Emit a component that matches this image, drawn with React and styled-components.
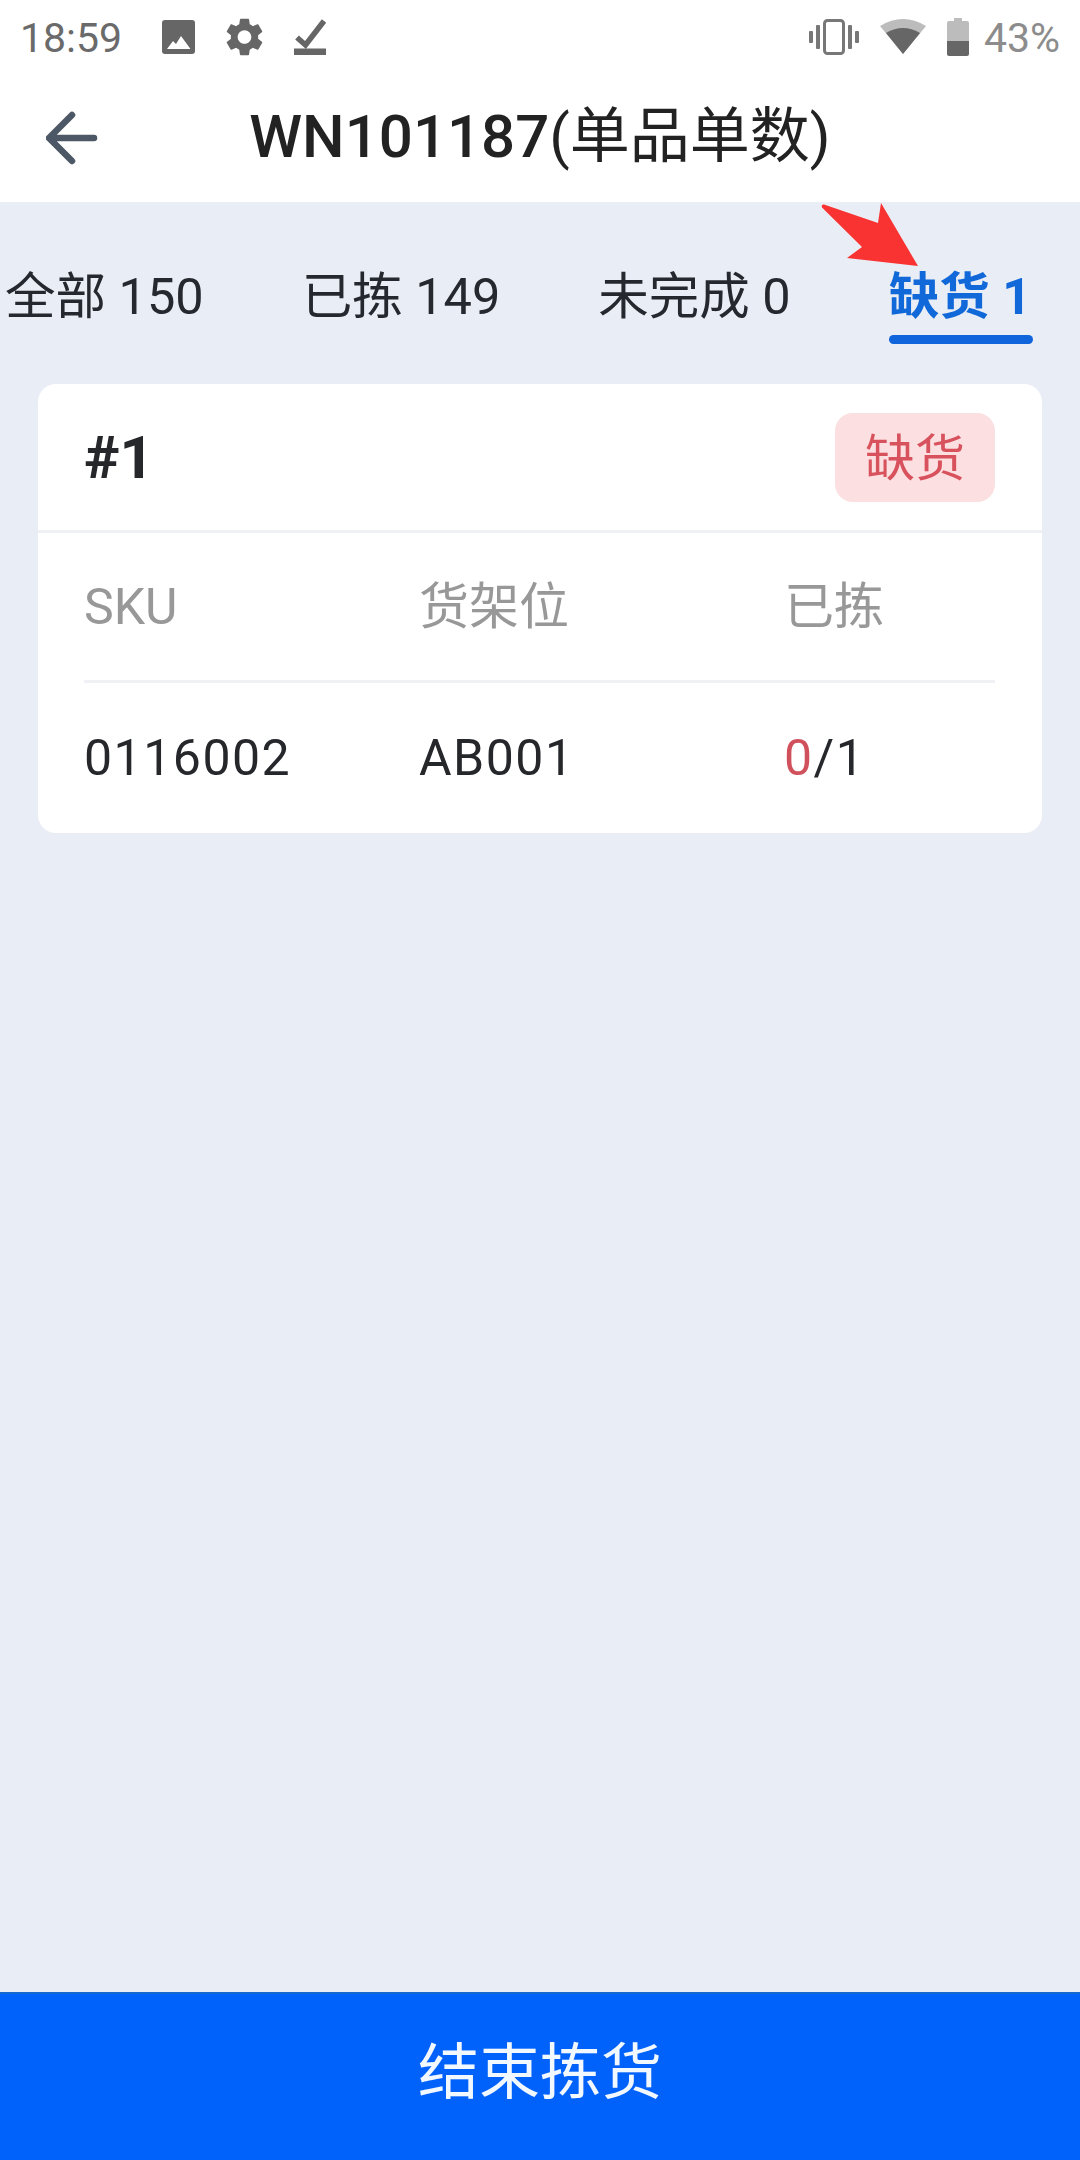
import React from "react";
import styled, { createGlobalStyle } from "styled-components";

const GlobalStyle = createGlobalStyle`
  html, body {
    margin: 0;
    padding: 0;
    background: #e9edf5;
  }
  * {
    box-sizing: border-box;
  }
`;

const FONT = `Roboto, "Noto Sans CJK SC", sans-serif`;

const tabs = [
  { id: "all", label: "全部 150" },
  { id: "picked", label: "已拣 149" },
  { id: "open", label: "未完成 0" },
  { id: "short", label: "缺货 1", active: true },
];

const ImageIcon = () => (
  <svg width="33" height="34" viewBox="0 0 33 34">
    <rect width="33" height="34" rx="3" fill="#666" />
    <path d="M5 29L11 21l3 3 5-8 9.5 13z" fill="#fff" />
  </svg>
);

const GearIcon = () => (
  <svg width="37" height="38" viewBox="2.6 2 18.8 20" fill="#666">
    <path d="M19.14 12.94c.04-.3.06-.61.06-.94 0-.32-.02-.64-.07-.94l2.03-1.58c.18-.14.23-.41.12-.61l-1.92-3.32c-.12-.22-.37-.29-.59-.22l-2.39.96c-.5-.38-1.03-.7-1.62-.94l-.36-2.54c-.04-.24-.24-.41-.48-.41h-3.84c-.24 0-.43.17-.47.41l-.36 2.54c-.59.24-1.13.57-1.62.94l-2.39-.96c-.22-.08-.47 0-.59.22L2.74 8.87c-.12.21-.08.47.12.61l2.03 1.58c-.05.3-.09.63-.09.94s.02.64.07.94l-2.03 1.58c-.18.14-.23.41-.12.61l1.92 3.32c.12.22.37.29.59.22l2.39-.96c.5.38 1.03.7 1.62.94l.36 2.54c.05.24.24.41.48.41h3.84c.24 0 .44-.17.47-.41l.36-2.54c.59-.24 1.13-.56 1.62-.94l2.39.96c.22.08.47 0 .59-.22l1.92-3.32c.12-.22.07-.47-.12-.61l-2.01-1.58zM12 15.6c-1.98 0-3.6-1.62-3.6-3.6s1.62-3.6 3.6-3.6 3.6 1.62 3.6 3.6-1.62 3.6-3.6 3.6z" />
  </svg>
);

const CheckIcon = () => (
  <svg width="32" height="37" viewBox="0 0 32 37">
    <path d="M3 19.5l8.5 7.5L30 3" fill="none" stroke="#666" strokeWidth="5.5" />
    <rect y="30.5" width="32" height="6.5" fill="#666" />
  </svg>
);

const VibrateIcon = () => (
  <svg width="50" height="36" viewBox="0 0 50 36" fill="#777">
    <rect x="15.5" y="1.5" width="19" height="33" rx="3" fill="none" stroke="#777" strokeWidth="3" />
    <rect x="0" y="12" width="4" height="12" rx="1" />
    <rect x="7" y="6" width="4" height="24" rx="1" />
    <rect x="39" y="6" width="4" height="24" rx="1" />
    <rect x="46" y="12" width="4" height="12" rx="1" />
  </svg>
);

const WifiIcon = () => (
  <svg width="46" height="37" viewBox="0 0 46 37">
    <path d="M0 8Q23-6 46 8L23 36z" fill="#bcbcbc" />
    <path d="M6 15Q23 5 40 15L23 36z" fill="#666" />
  </svg>
);

const BatteryIcon = () => (
  <svg width="22" height="38" viewBox="0 0 22 38">
    <path d="M7 0h8v3h5a2 2 0 0 1 2 2v18H0V5a2 2 0 0 1 2-2h5z" fill="#bcbcbc" />
    <path d="M0 23h22v13a2 2 0 0 1-2 2H2a2 2 0 0 1-2-2z" fill="#666" />
  </svg>
);

const BackIcon = () => (
  <svg width="52" height="56" viewBox="0 0 52 56">
    <path d="M48 28H4M26 5L3 28l23 23" fill="none" stroke="#4d5866" strokeWidth="6.5" strokeLinecap="round" strokeLinejoin="round" />
  </svg>
);

export default function App() {
  return (
    <Page>
      <GlobalStyle />
      <TopArea>
        <StatusBar>
          <StatusGroup>
            <Clock>18:59</Clock>
            <NotifyIcons>
              <ImageIcon />
              <GearIcon />
              <CheckIcon />
            </NotifyIcons>
          </StatusGroup>
          <StatusGroup>
            <SystemIcons>
              <VibrateIcon />
              <WifiIcon />
              <BatteryIcon />
            </SystemIcons>
            <Percent>43%</Percent>
          </StatusGroup>
        </StatusBar>
        <Toolbar>
          <BackButton>
            <BackIcon />
          </BackButton>
          <Title>
            WN101187<TitleNote>(单品单数)</TitleNote>
          </Title>
        </Toolbar>
      </TopArea>

      <Body>
        <TabBar>
          {tabs.map((tab) => (
            <Tab key={tab.id} $active={tab.active}>
              {tab.label}
              {tab.active && <TabLine />}
            </Tab>
          ))}
        </TabBar>

        <Card>
          <CardHead>
            <CardNo>#1</CardNo>
            <Badge>缺货</Badge>
          </CardHead>
          <CardBody>
            <HeadRow>
              <span>SKU</span>
              <CjkLabel>货架位</CjkLabel>
              <CjkLabel>已拣</CjkLabel>
            </HeadRow>
            <DataRow>
              <span>0116002</span>
              <span>AB001</span>
              <span>
                <Missing>0</Missing>/1
              </span>
            </DataRow>
          </CardBody>
        </Card>
      </Body>

      <FinishButton>结束拣货</FinishButton>

      <Pointer viewBox="0 0 100 66" width="100" height="66">
        <path d="M3 1.5Q0 1 1 4.5L41 44 26 55 97 63 60 0 57 20z" fill="#f93232" />
      </Pointer>
    </Page>
  );
}

const Page = styled.div`
  position: relative;
  display: flex;
  flex-direction: column;
  width: 1080px;
  height: 2160px;
  overflow: hidden;
  background: #e9edf5;
  font-family: ${FONT};
`;

const TopArea = styled.header`
  background: #fff;
  height: 202px;
`;

const StatusBar = styled.div`
  display: flex;
  align-items: center;
  justify-content: space-between;
  height: 73px;
  padding: 0 20px;
`;

const StatusGroup = styled.div`
  display: flex;
  align-items: center;
`;

const Clock = styled.span`
  padding-top: 2px;
  font-size: 41px;
  color: #6a6a6a;
`;

const NotifyIcons = styled.div`
  display: flex;
  align-items: center;
  gap: 31px;
  margin-left: 40px;
`;

const SystemIcons = styled.div`
  display: flex;
  align-items: center;
  gap: 21px;
`;

const Percent = styled.span`
  margin-left: 15px;
  padding-top: 2px;
  font-size: 41px;
  color: #8c8c8c;
`;

const Toolbar = styled.div`
  display: grid;
  grid-template-columns: 1fr auto 1fr;
  align-items: center;
  height: 129px;
  padding: 0 0 14px 46px;
`;

const BackButton = styled.div`
  display: flex;
  padding-top: 14px;
`;

const Title = styled.h1`
  margin: 0 0 0 -46px;
  font-size: 60px;
  font-weight: 500;
  color: #222;
  white-space: nowrap;
`;

const TitleNote = styled.span`
  font-weight: 400;
`;

const Body = styled.main`
  flex: 1;
  padding-top: 66px;
`;

const TabBar = styled.nav`
  display: flex;
  gap: 98px;
  padding-left: 5px;
`;

const Tab = styled.div`
  display: flex;
  flex-direction: column;
  font-size: 50.5px;
  line-height: 58px;
  white-space: nowrap;
  font-weight: ${({ $active }) => ($active ? 700 : 400)};
  color: ${({ $active }) => ($active ? "#1168d9" : "#25282e")};
`;

const TabLine = styled.i`
  display: block;
  width: 144px;
  height: 9px;
  margin-top: 9px;
  border-radius: 5px;
  background: #1064dc;
`;

const Card = styled.section`
  width: 1004px;
  margin: 40px 0 0 38px;
  background: #fff;
  border-radius: 18px;
`;

const CardHead = styled.div`
  display: flex;
  align-items: center;
  justify-content: space-between;
  height: 149px;
  padding: 0 47px 0 46px;
  border-bottom: 3px solid #f0f1f4;
`;

const CardNo = styled.span`
  font-size: 60px;
  font-weight: 700;
  color: #25272b;
`;

const Badge = styled.span`
  display: flex;
  align-items: center;
  justify-content: center;
  width: 160px;
  height: 89px;
  padding-bottom: 6px;
  border-radius: 18px;
  background: #fcdfe0;
  color: #d8525e;
  font-size: 50px;
`;

const CardBody = styled.div`
  padding: 0 47px 0 46px;
`;

const Row = styled.div`
  display: grid;
  grid-template-columns: 335px 365px 1fr;
  align-items: center;
  font-size: 50px;
`;

const HeadRow = styled(Row)`
  height: 150px;
  border-bottom: 3px solid #f0f1f4;
  color: #989898;
`;

const CjkLabel = styled.span`
  padding-bottom: 10px;
`;

const DataRow = styled(Row)`
  height: 150px;
  color: #25272b;
  letter-spacing: 1.5px;
`;

const Missing = styled.span`
  color: #d0505c;
`;

const FinishButton = styled.button`
  height: 168px;
  padding: 0 0 19px;
  border: none;
  border-top: 2px solid #1368d2;
  background: #0062fa;
  color: #f2f8ff;
  font-family: ${FONT};
  font-size: 61px;
`;

const Pointer = styled.svg`
  position: absolute;
  left: 821px;
  top: 203px;
`;
